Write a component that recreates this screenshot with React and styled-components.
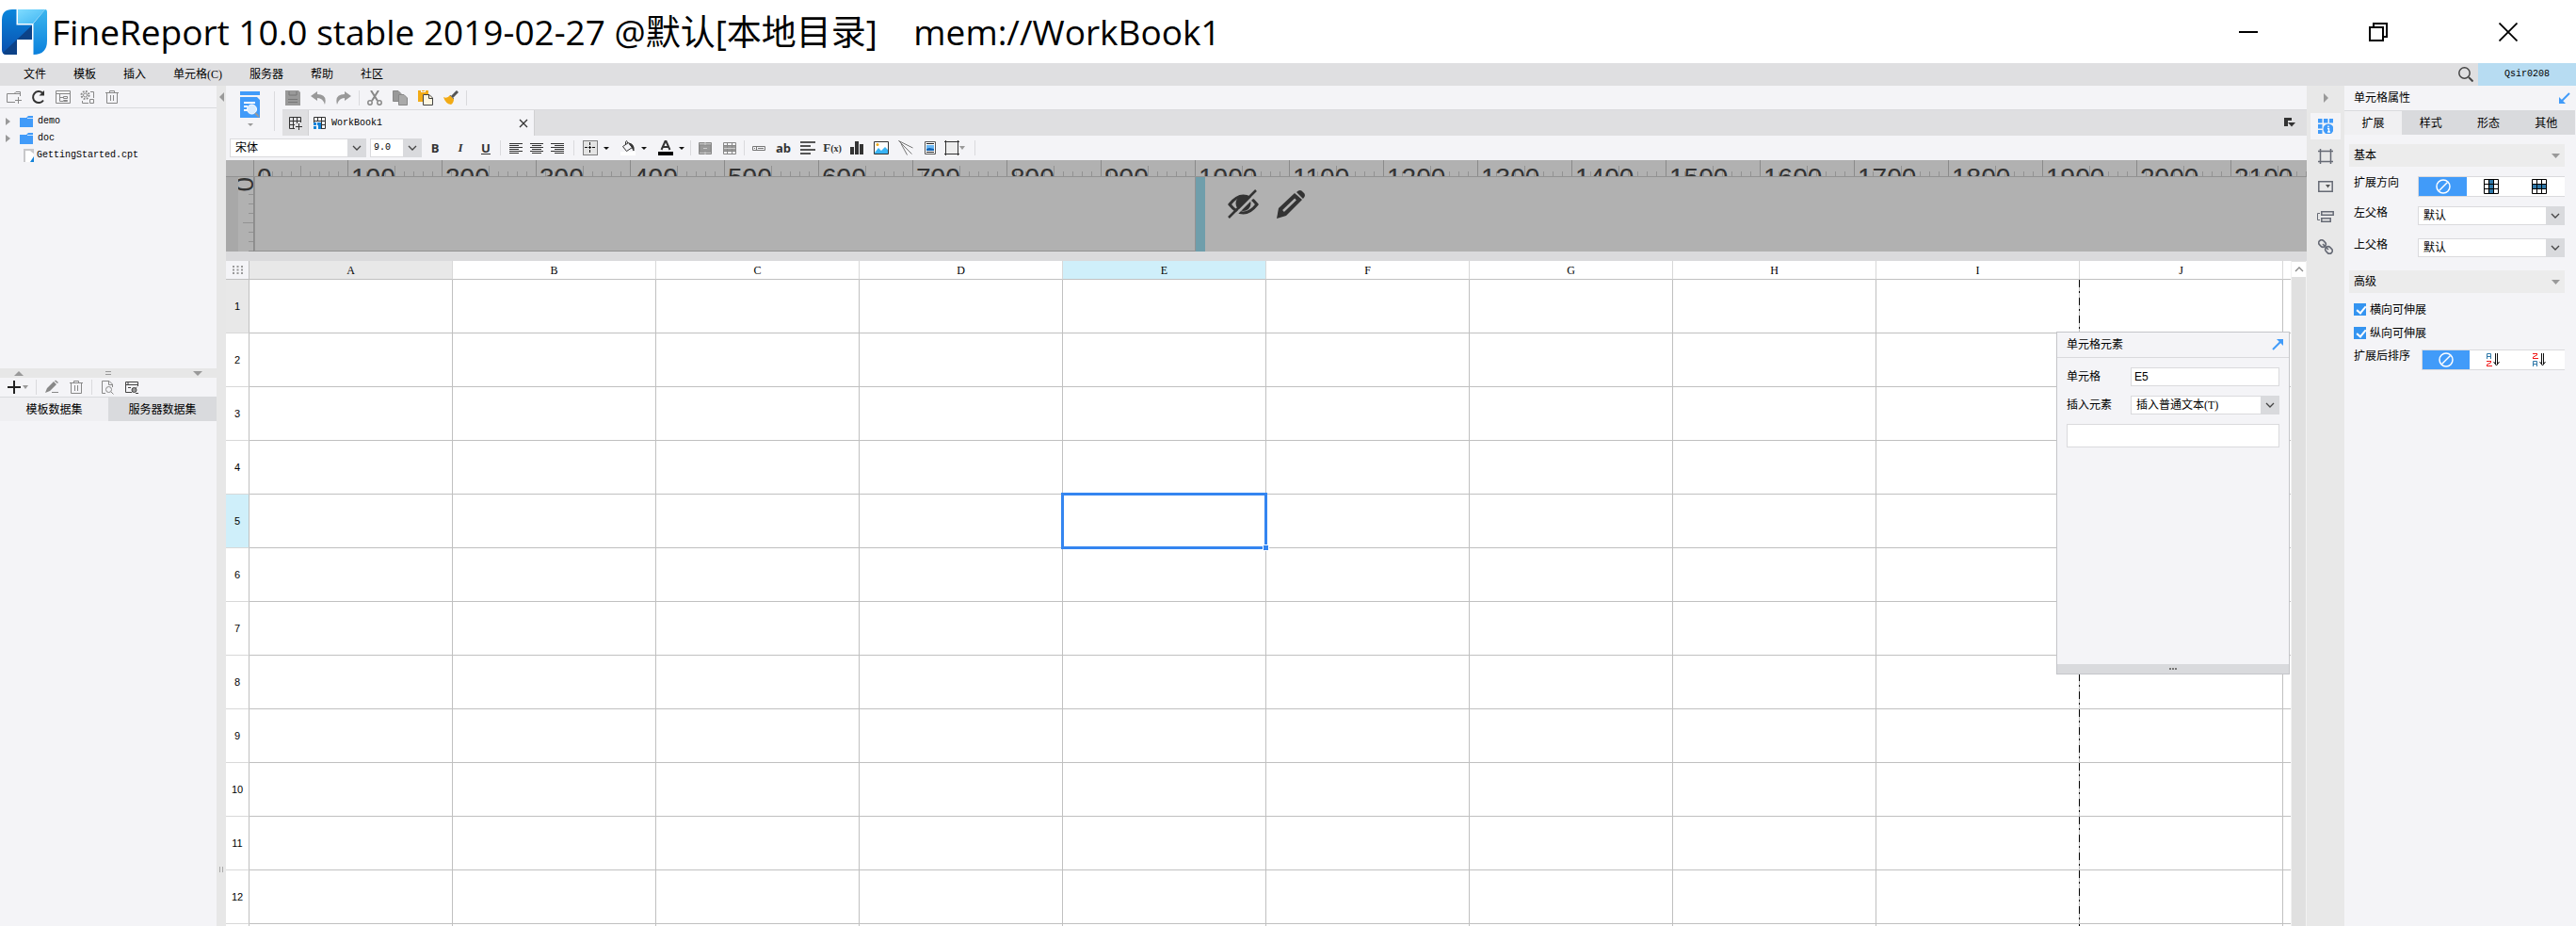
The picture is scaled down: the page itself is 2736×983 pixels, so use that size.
import React from 'react';
import styled, { createGlobalStyle, css } from 'styled-components';

const GlobalStyle = createGlobalStyle`
    * {
        box-sizing: border-box;
    }
    body {
        margin: 0;
        background: #f4f4f7;
        color: #000;
        font: 12px/16px "Liberation Serif", "Noto Sans CJK SC", sans-serif;
    }
    button, select, input {
        font: inherit;
        color: inherit;
        margin: 0;
        padding: 0;
        border: 0;
        border-radius: 0;
        background: none;
    }
    svg {
        display: block;
        flex: none;
    }
`;

const mono = css`
    font-family: "Liberation Mono", "Noto Sans CJK SC", monospace;
    font-size: 10px;
`;

/* window */
const AppStyle = styled.div`
    display: flex;
    flex-direction: column;
    height: 100vh;
    overflow: hidden;
`;
const TitleBarStyle = styled.header`
    display: flex;
    align-items: center;
    flex: none;
    height: 67px;
    padding: 0 3px 0 2px;
    background: #fff;
`;
const TitleStyle = styled.h1`
    flex: 1;
    margin: 0 0 0 5px;
    font: 400 37px/48px "Open Sans", "Noto Sans CJK SC", sans-serif;
    white-space: pre;
`;
const WindowBtnStyle = styled.button`
    display: flex;
    align-items: center;
    justify-content: center;
    width: 138px;
    height: 64px;
`;
const MenuBarStyle = styled.nav`
    display: flex;
    align-items: center;
    flex: none;
    gap: 29px;
    height: 24px;
    padding-left: 25px;
    background: #dfdfe1;
`;
const SearchBtnStyle = styled.button`
    margin-left: auto;
    margin-right: -24px;
`;
const UserStyle = styled.button`
    ${mono}
    width: 104px;
    height: 24px;
    background: #b7dcf2;
`;
const BodyStyle = styled.div`
    display: flex;
    flex: 1;
    min-height: 0;
`;

/* shared parts */
const BtnStyle = styled.button`
    display: flex;
    align-items: center;
    justify-content: center;
    gap: ${({$gap}) => $gap || 0}px;
    flex: none;
    width: ${({$w}) => $w || 26}px;
    height: 20px;
`;
const SepStyle = styled.i`
    flex: none;
    width: 1px;
    height: 16px;
    margin: 0 ${({$m}) => $m || 2}px;
    background: #dadadd;
`;
const SelectWrapStyle = styled.div`
    position: relative;
    flex: ${({$w}) => $w ? `0 0 ${$w}px` : '1'};
    height: 20px;
    select {
        appearance: none;
        width: 100%;
        height: 20px;
        padding: 0 22px 0 ${({$pad}) => $pad || 5}px;
        border: 1px solid #dadadd;
        background: #fff;
        ${({$mono}) => $mono && mono}
    }
`;
const CaretStyle = styled.span`
    position: absolute;
    top: 0;
    right: 0;
    display: flex;
    align-items: center;
    justify-content: center;
    width: 20px;
    height: 20px;
    background: #d9dadd;
    pointer-events: none;
`;

/* left side */
const SideStyle = styled.aside`
    display: flex;
    flex-direction: column;
    flex: none;
    width: 230px;
`;
const SideToolbarStyle = styled.div`
    display: flex;
    align-items: center;
    flex: none;
    height: ${({$h}) => $h}px;
    padding-left: 2px;
    border-bottom: 1px solid #d9dadd;
`;
const TreeStyle = styled.ul`
    ${mono}
    flex: none;
    height: 276px;
    margin: 0;
    padding: 5px 0 0;
    list-style: none;
`;
const NodeStyle = styled.li`
    display: flex;
    align-items: center;
    height: 18px;
    padding-left: ${({$leaf}) => $leaf ? 25 : 6}px;
    gap: ${({$leaf}) => $leaf ? 3 : 5}px;
    svg + svg {
        margin-left: 5px;
    }
`;
const HSplitStyle = styled.div`
    display: flex;
    align-items: center;
    justify-content: space-between;
    flex: none;
    height: 10px;
    padding: 0 15px;
    background: #e7e7e7;
`;
const DataTabStyle = styled.button`
    flex: 1;
    height: 25px;
    background: ${({$active}) => $active ? '#efeff2' : '#d9dadd'};
`;
const TabsStyle = styled.div`
    display: flex;
    flex: none;
`;
const VSplitStyle = styled.div`
    display: flex;
    flex-direction: column;
    align-items: center;
    justify-content: space-between;
    flex: none;
    width: 10px;
    padding: 7px 0 57px;
    background: #e7e7e7;
`;

/* centre */
const MainStyle = styled.main`
    position: relative;
    display: flex;
    flex-direction: column;
    flex: 1;
    min-width: 0;
`;
const TopStyle = styled.div`
    display: flex;
    flex: none;
    height: 53px;
`;
const PreviewBtnStyle = styled.button`
    display: flex;
    flex-direction: column;
    align-items: center;
    gap: 6px;
    width: 52px;
    margin: 6px 0 5px;
    border-right: 1px solid #dadadd;
`;
const TopRightStyle = styled.div`
    flex: 1;
    padding-left: 8px;
`;
const ActionsStyle = styled.div`
    display: flex;
    align-items: center;
    height: 25px;
    gap: 1px;
    margin-left: -2px;
`;
const FileTabsStyle = styled.div`
    display: flex;
    height: 28px;
    padding-right: 12px;
    align-items: center;
    border-top: 1px solid #dadadd;
    background: #dfdfe1;
`;
const FileTabStyle = styled.div`
    display: flex;
    align-items: center;
    width: 241px;
    height: 27px;
    padding: 0 6px 0 5px;
    margin-right: auto;
    border: solid #d0d0d2;
    border-width: 0 1px;
    background: #f4f4f7;
    span {
        ${mono}
        flex: 1;
        padding-left: 5px;
    }
`;
const FormatBarStyle = styled.div`
    display: flex;
    align-items: center;
    flex: none;
    height: 26px;
    padding-left: 4px;
    gap: 4px;
`;
const GroupsStyle = styled.div`
    display: flex;
    margin-left: -3px;
`;
const GroupStyle = styled.div`
    display: flex;
    align-items: center;
    gap: ${({$gap}) => $gap || 0}px;
    height: 16px;
    padding: 0 ${({$pr}) => $pr || 2}px 0 ${({$pl}) => $pl || 0}px;
    border-right: 1px solid #dadadd;
`;
const GlyphStyle = styled.span`
    font-family: ${({$serif}) => $serif ? '"Liberation Serif", serif' : '"Open Sans", sans-serif'};
    font-size: 13px;
    font-weight: 700;
    line-height: 14px;
    color: #333;
    font-style: ${({$italic}) => $italic ? 'italic' : 'normal'};
    ${({$line}) => $line && css`
        line-height: 12px;
        border-bottom: 1px solid #333;
    `}
    small {
        font-size: 10px;
    }
`;

/* parameter pane */
const RulerStyle = styled.div`
    display: flex;
    flex: none;
    height: 18px;
    padding-left: 29px;
    background: #b1b1b1;
    border-bottom: 1px solid #929292;
    overflow: hidden;
`;
const tick = '#929292';
const MarkStyle = styled.span`
    flex: 0 0 100px;
    height: 17px;
    padding: 3px 0 0 3px;
    border-left: 1px solid #8a8a8a;
    background:
        linear-gradient(${tick}, ${tick}) 49px 100% / 1px 11px no-repeat,
        repeating-linear-gradient(90deg, transparent 0 9px, ${tick} 9px 10px) 0 100% / 100% 5px no-repeat;
    font: 28px/32px "Liberation Sans", sans-serif;
    color: #333;
`;
const ParamStyle = styled.div`
    display: flex;
    flex: none;
    height: 79px;
    background: #b1b1b1;
`;
const VRulerStyle = styled.div`
    width: 30px;
    overflow: hidden;
    border-left: 13px solid #a8a8a8;
    border-right: 1px solid #8a8a8a;
    background:
        linear-gradient(${tick}, ${tick}) 100% 48px / 11px 1px no-repeat,
        repeating-linear-gradient(transparent 0 9px, ${tick} 9px 10px) 100% 9px / 5px 100% no-repeat;
    font: 28px/20px "Liberation Sans", sans-serif;
    writing-mode: vertical-rl;
    color: #333;
`;
const CanvasStyle = styled.div`
    width: 1000px;
    border: solid #929292;
    border-width: 0 1px 1px;
`;
const HandleStyle = styled.div`
    width: 10px;
    background: #6f9eab;
`;
const ParamActionsStyle = styled.div`
    display: flex;
    gap: 18px;
    padding: 13px 24px;
    align-items: flex-start;
`;

/* sheet */
const SheetAreaStyle = styled.div`
    display: flex;
    flex: 1;
    min-height: 0;
    border-top: 10px solid #dadadc;
`;
const SheetClipStyle = styled.div`
    flex: 1;
    overflow: hidden;
    background: #fff;
`;
const SheetStyle = styled.table`
    width: 100%;
    table-layout: fixed;
    border-collapse: separate;
    border-spacing: 0;
    th, td {
        padding: 0;
        border: solid #c0c0c0;
        border-width: 0 1px 1px 0;
    }
    th {
        font-weight: 400;
    }
    tr > :last-child {
        border-right: 0;
    }
`;
const headBg = ({$first, $active}) => $active ? '#cfeffa' : $first ? '#e8e8e8' : '#fff';
const ColHeadStyle = styled.th`
    && {
        width: ${({$w}) => $w}px;
        height: 20px;
        border-right-color: #d8d8d8;
        background: ${headBg};
    }
`;
const CornerStyle = styled.th`
    width: 25px;
    background: #f4f4f7;
    svg {
        margin: 0 auto;
    }
`;
const RowHeadStyle = styled.th`
    && {
        height: 57px;
        border-bottom-color: #d8d8d8;
        background: ${headBg};
        font-family: "Liberation Sans", sans-serif;
        font-size: 11px;
    }
`;
const CellStyle = styled.td`
    position: relative;
    ${({$pageEnd}) => $pageEnd && css`
        && {
            border-right-color: transparent;
            background: repeating-linear-gradient(#000 0 8px, #c0c0c0 8px 12px, #000 12px 14px, #c0c0c0 14px 19px)
                right / 1px 100% no-repeat border-box;
        }
    `}
`;
const SelectionStyle = styled.div`
    position: absolute;
    inset: -2px;
    z-index: 1;
    border: 3px solid #3485f0;
    &::after {
        content: "";
        position: absolute;
        right: -4px;
        bottom: -4px;
        width: 5px;
        height: 5px;
        background: #3485f0;
        box-shadow: 0 0 0 1px #fff;
    }
`;
const ScrollStyle = styled.div`
    width: 17px;
    padding-top: 1px;
    border: solid #f2f2f2;
    border-width: 0 1px;
    background: #e0e0e0;
    button {
        display: flex;
        align-items: center;
        justify-content: center;
        width: 15px;
        height: 16px;
        background: #fff;
    }
`;

/* floating cell element window */
const FloatStyle = styled.section`
    position: absolute;
    top: 261px;
    right: 18px;
    z-index: 2;
    display: flex;
    flex-direction: column;
    width: 248px;
    height: 364px;
    border: 1px solid #c4c5c9;
    background: #f4f4f7;
`;
const FloatHeadStyle = styled.div`
    display: flex;
    align-items: center;
    justify-content: space-between;
    height: 27px;
    padding: 0 6px 0 10px;
    border-bottom: 1px solid #d9dadd;
`;
const FloatBodyStyle = styled.div`
    display: flex;
    flex-direction: column;
    flex: 1;
    gap: 10px;
    padding: 10px;
`;
const FieldStyle = styled.div`
    display: flex;
    align-items: center;
    > label {
        flex: 0 0 68px;
    }
`;
const InputStyle = styled.input`
    && {
        flex: 1;
        width: 100%;
        min-width: 0;
        height: ${({$h}) => $h || 20}px;
        padding: 0 3px;
        border: 1px solid #dadadd;
        background: #fff;
        font-family: "Liberation Sans", sans-serif;
    }
`;
const GripStyle = styled.div`
    display: flex;
    align-items: center;
    justify-content: center;
    height: 10px;
    background: #d9dadd;
`;

/* right side */
const RailStyle = styled.div`
    display: flex;
    flex-direction: column;
    align-items: center;
    flex: none;
    gap: 4px;
    width: 40px;
    background: #e8e8e8;
`;
const RailBtnStyle = styled.button`
    display: flex;
    align-items: center;
    justify-content: center;
    width: 32px;
    height: ${({$h}) => $h || 28}px;
    background: ${({$active}) => $active ? '#f4f4f7' : 'none'};
`;
const PropsStyle = styled.aside`
    flex: none;
    width: 246px;
    padding-right: 1px;
`;
const PropsHeadStyle = styled.div`
    display: flex;
    align-items: center;
    justify-content: space-between;
    height: 27px;
    padding: 0 5px 0 10px;
    border-bottom: 1px solid #d9dadd;
`;
const PropTabStyle = styled.button`
    flex: 1;
    height: 25px;
    background: ${({$active}) => $active ? '#f0f0f2' : '#d9dadd'};
`;
const PropsBodyStyle = styled.div`
    padding: 10px 11px 0 5px;
`;
const SectionHeadStyle = styled.div`
    display: flex;
    align-items: center;
    justify-content: space-between;
    height: 24px;
    margin-bottom: 10px;
    padding: 0 5px;
    background: #ececec;
`;
const PropRowStyle = styled.div`
    display: flex;
    padding-left: 5px;
    margin-bottom: ${({$mb}) => $mb}px;
    > span, > label {
        flex: 0 0 ${({$label}) => $label || 68}px;
        line-height: 14px;
    }
`;
const SegStyle = styled.div`
    display: flex;
    flex: 1;
    height: 22px;
    padding-right: 2px;
    border: solid #dadadd;
    border-width: 1px 0 1px 1px;
    background: #fff;
`;
const SegBtnStyle = styled.button`
    display: flex;
    align-items: center;
    justify-content: center;
    flex: 1;
    background: ${({$active}) => $active ? '#419bf9' : '#fff'};
`;
const CheckStyle = styled.label`
    display: flex;
    align-items: center;
    gap: 4px;
    height: 15px;
    margin-bottom: 10px;
    padding-left: 5px;
    input {
        appearance: none;
        display: grid;
        width: 13px;
        height: 13px;
        background: #3494f0;
        &:checked::after {
            content: "";
            width: 4px;
            height: 8px;
            margin: 1px 0 0 5px;
            border: solid #fff;
            border-width: 0 2px 2px 0;
            transform: rotate(40deg);
        }
    }
`;

const Svg = ({w = 16, h = 16, c = '#888', sw = 1, children}) => (
    <svg width={w} height={h} viewBox={`0 0 ${w} ${h}`} fill="none" stroke={c} strokeWidth={sw} aria-hidden="true">
        {children}
    </svg>
);
const Arrow = ({dir = 'down', c = '#999', w = 9, h = 5}) => {
    const d = {
        down: `M0 0H${w}L${w / 2} ${h}Z`,
        up: `M0 ${h}H${w}L${w / 2} 0Z`,
        left: `M${w} 0V${h}L0 ${h / 2}Z`,
        right: `M0 0V${h}L${w} ${h / 2}Z`,
    }[dir];
    return <Svg w={w} h={h} c="none"><path d={d} fill={c}/></Svg>;
};
const Chevron = ({up}) => (
    <Svg w={10} h={6} c={up ? '#888' : '#444'} sw={1.3}><path d={up ? 'M1 5L5 1L9 5' : 'M1 1L5 5L9 1'}/></Svg>
);
const Select = ({id, label, value, ...rest}) => (
    <SelectWrapStyle {...rest}>
        <select id={id} aria-label={label} defaultValue={value}><option>{value}</option></select>
        <CaretStyle><Chevron/></CaretStyle>
    </SelectWrapStyle>
);

const Logo = () => (
    <svg width="48" height="48" viewBox="0 0 48 48" aria-hidden="true">
        <defs>
            <linearGradient id="lgA" x1="0" y1="0" x2="0" y2="1"><stop stopColor="#0a86dc"/><stop offset="1" stopColor="#0a4fae"/></linearGradient>
            <linearGradient id="lgB" x1="0" y1="0" x2="1" y2="1"><stop stopColor="#7fdcff"/><stop offset="1" stopColor="#3fb4f2"/></linearGradient>
            <linearGradient id="lgC" x1="0" y1="0" x2="0" y2="1"><stop stopColor="#3cb6ee"/><stop offset="1" stopColor="#0a80dc"/></linearGradient>
        </defs>
        <path d="M11 0H15.5V16.5H32V32H16V48H5Q0 48 0 43V11Q0 0 11 0Z" fill="url(#lgA)"/>
        <path d="M32 17V32H16V48H5Q2 48 1 46Z" fill="#0d4287"/>
        <path d="M17 0H46L33 15H17Z" fill="url(#lgB)"/>
        <path d="M46 0Q48 0 48 3V33Q48 48 33.5 48V15Z" fill="url(#lgC)"/>
    </svg>
);

const icons = {
    newFolder: <Svg><path d="M9 13.500H.5V4.500H8L10 2.500H14.500V7M8 4.500H14M12.500 8V15M9 11.500H16"/></Svg>,
    refresh: <Svg c="#333" sw={2}><path d="M12 3.500A6 6 0 1 0 13 11.500"/><path d="M14 1V6.500H8.500Z" fill="#333" stroke="none"/></Svg>,
    panel: <Svg><path d="M.5 1.500H15.500V14.500H.5ZM.5 4.500H15.500M4.500 5V12.500H8M4.500 8.500H8M8.500 7.500H12.500V9.500H8.500ZM8.500 11.500H12.500V12.500H8.500Z"/></Svg>,
    gear: <Svg><circle cx="5.500" cy="6" r="2"/><circle cx="5.500" cy="6" r="4" strokeDasharray="1.700 1.440" strokeWidth="2"/><path d="M11 2.500H14.500V9M2.500 12V14.500H9M10.500 10.500H14.500V14.500H10.500Z"/></Svg>,
    trash: <Svg><path d="M1 3.500H15M5.500 3V1.500H10.500V3M2.500 4V14.500H13.500V4M6.500 6V12M9.500 6V12"/></Svg>,
    folder: <Svg w={14} h={12} c="none"><path d="M0 2H7L9 0H14V12H0Z" fill="#419bf9"/><path d="M8 2.500H14" stroke="#cfe6ff"/></Svg>,
    cpt: <Svg w={11} h={14} c="none"><path d="M0 0H11V5L6 2H2V14H0Z" fill="#c8c8ca"/><path d="M2 2H7L11 6V14H2Z" fill="#fff"/><path d="M7 14L11 8V14Z" fill="#1282d8"/></Svg>,
    plus: <Svg w={14} h={14} c="#222" sw={2}><path d="M7 0V14M0 7H14"/></Svg>,
    edit: <Svg c="none"><path d="M1 14L3 9L10 2L13 5L6 12ZM11 1.500L12 .5L15 3L14 4Z" fill="#888"/><path d="M8 13.500H15" stroke="#888"/></Svg>,
    docSearch: <Svg><path d="M6 14.500H2.500V1.500H10L13.500 5V8M9.500 1.500V5.500H13"/><circle cx="9.500" cy="10.500" r="3"/><path d="M12 13L14.500 15.500"/></Svg>,
    winLink: <Svg c="#444"><path d="M7 13.500H1.500V2.500H14.500V7M1.500 5.500H14.500M4 8.500H7M3 4H5"/><path d="M7 14L13.500 8"/><circle cx="10.500" cy="11" r="2.500" fill="#999"/><path d="M12 14.500H15"/></Svg>,
    preview: (
        <Svg w={21} h={28} c="none">
            <path d="M0 0H21V4H0ZM0 6H18L21 9V28H0Z" fill="#419bf9"/>
            <path d="M4 12H16M4 16H8M4 20H8" stroke="#fff" strokeWidth="2"/>
            <circle cx="12.500" cy="19" r="5" fill="#d8ecff" stroke="#fff"/><path d="M16 23L20 27" stroke="#999" strokeWidth="2"/>
        </Svg>
    ),
    save: <Svg c="none"><path d="M0 0H14L16 2V16H0Z" fill="#999"/><path d="M4 1V5H12V1M3 9.500H13M3 12.500H13" stroke="#777"/></Svg>,
    undo: <Svg c="none"><path d="M7 1L0 6L7 11V8Q13 8 15 15Q18 4 7 4Z" fill="#999"/></Svg>,
    redo: <Svg c="none"><path d="M9 1L16 6L9 11V8Q3 8 1 15Q-2 4 9 4Z" fill="#999"/></Svg>,
    cut: <Svg c="#888" sw={2}><path d="M4 0L11 11M12 0L5 11"/><circle cx="3" cy="13" r="2.200" strokeWidth="1.500"/><circle cx="13" cy="13" r="2.200" strokeWidth="1.500"/></Svg>,
    copy: <Svg c="#888"><path d="M.5 .5H6L9 3.500V11.500H.5Z" fill="#999"/><path d="M6.500 4.500H12L15.500 8V15.500H6.500Z" fill="#aaa"/></Svg>,
    paste: <Svg c="none"><path d="M0 0H3V2H8V0H11V4H5V12H0ZM4 0H7V1H4Z" fill="#f2ab16"/><path d="M5.500 4.500H12L15.500 8V15.500H5.500Z" fill="#fff6e0" stroke="#444"/><path d="M11.500 5V8.500H15" stroke="#444"/></Svg>,
    brush: <Svg c="none"><path d="M15 1L9 7" stroke="#555" strokeWidth="3"/><path d="M0 7Q4 9 7 5L11 9Q11 13 8 15Q2 14 0 7Z" fill="#f2ab16"/><path d="M7 5L11 9" stroke="#777"/></Svg>,
    newSheet: <Svg w={14} h={14} c="#333"><path d="M6 12.500H.5V.5H12.500V6M.5 4.500H12.500M.5 8.500H6M4.500 1V12M8.500 1V7M10.500 7V14M7 10.500H14"/></Svg>,
    sheet: <Svg w={14} h={14} c="#333"><path d="M.5 6V.5H12.500V12.500H9M.5 4.500H12.500M4.500 1V5M8.500 1V13M8 8.500H12"/><path d="M0 6H3V9H0ZM0 10H3V13H0ZM4 6H8V13H5V9H4Z" fill="#1282d8" stroke="none"/></Svg>,
    close: <Svg w={10} h={10} c="#333" sw={1.3}><path d="M1 1L9 9M9 1L1 9"/></Svg>,
    tabList: <Svg w={12} h={11} c="none"><path d="M0 0H8V3H4V9H0Z" fill="#333"/><path d="M4 5H12L8 9.500Z" fill="#333"/></Svg>,
    left: <Svg w={14} h={11} c="#333"><path d="M0 .5H14M0 2.500H10M0 4.500H14M0 6.500H10M0 8.500H14M0 10.500H10"/></Svg>,
    center: <Svg w={14} h={11} c="#333"><path d="M0 .5H14M2 2.500H12M0 4.500H14M2 6.500H12M0 8.500H14M2 10.500H12"/></Svg>,
    right: <Svg w={14} h={11} c="#333"><path d="M0 .5H14M4 2.500H14M0 4.500H14M4 6.500H14M0 8.500H14M4 10.500H14"/></Svg>,
    border: <Svg c="#111"><path d="M.5 .5H15.500V15.500H.5Z" fill="#e4e4e4" strokeDasharray="1 1"/><path d="M7.500 2V14M2 7.500H14" strokeDasharray="3 1"/></Svg>,
    fill: <Svg c="#333"><path d="M2.500 6.500L8.500 2.500L12.500 7.500L6.500 11.500ZM5.500 5V1.500Q7 -1 7.500 3"/><path d="M9 3Q15 4 14 11L12 7Z" fill="#333"/><path d="M0 14H16" stroke="#fff" strokeWidth="4"/></Svg>,
    font: <Svg c="#333" sw={2}><path d="M3.500 10L7.500 1H8.500L12.500 10M5 7H11"/><path d="M0 14H16" stroke="#000" strokeWidth="4"/></Svg>,
    merge: <Svg w={14} h={13}><path d="M.5 .5H13.500V12.500H.5Z" fill="#bbb"/><path d="M1 3H13V10H1Z" fill="#999"/><path d="M7 0V3M7 10V13M5 6.500H9" stroke="#ccc"/></Svg>,
    unmerge: <Svg w={14} h={13}><path d="M0 3H14V10H0Z" fill="#999" stroke="none"/><path d="M.5 .5H13.500V12.500H.5ZM0 3.500H14M0 9.500H14M4.500 0V13M9.500 0V13"/><path d="M1 6.500H13" stroke="#ccc"/></Svg>,
    textBox: <Svg w={14} h={5} c="#777"><path d="M.5 .5H13.500V4.500H.5ZM4.500 0V5M2 2.500H3M6 2.500H12"/></Svg>,
    lines: <Svg w={16} h={14} c="#555" sw={2}><path d="M0 1H16M0 5H11M0 9H16M0 13H11"/></Svg>,
    chart: <Svg w={14} h={14} c="none"><path d="M0 6H4V14H0ZM5 0H9V14H5ZM10 3H14V14H10Z" fill="#333"/></Svg>,
    image: <Svg w={16} h={14} c="#333"><path d="M.5 .5H15.500V13.500H.5Z" fill="#fff"/><path d="M1 12L5 7L8 10L12 6L15 9V13H1Z" fill="#39b4f5" stroke="none"/><circle cx="4" cy="3.500" r="1.500" fill="#f2ab16" stroke="none"/></Svg>,
    slope: <Svg c="#777"><path d="M.5 .5L15.500 8M.5 .5L14.500 14.500M3 3.500L9.500 15.500"/></Svg>,
    report: <Svg w={12} h={14} c="#555"><path d="M.5 .5H11.500V13.500H.5Z" fill="#fff"/><path d="M2 2.500H10M2 11.500H10" stroke="#222"/><path d="M2 4H10V10H2Z" fill="#6bb8f5" stroke="none"/><path d="M2 10V8L5 7L10 8V10Z" fill="#1464b4" stroke="none"/></Svg>,
    shape: <Svg c="#333"><path d="M1.500 0V16M14.500 0V16M0 1.500H16M0 14.500H16"/><path d="M2 2H14V14H2Z" fill="#eee" stroke="none"/></Svg>,
};

const columns = ['A', 'B', 'C', 'D', 'E', 'F', 'G', 'H', 'I', 'J'];
const rows = Array.from({length: 13}, (_, i) => i + 1);
const marks = Array.from({length: 22}, (_, i) => i * 100);
const selected = {col: 'E', row: 5};

const SidePanel = () => (
    <SideStyle>
        <SideToolbarStyle $h={24}>
            {['newFolder', 'refresh', 'panel', 'gear', 'trash'].map(n => (
                <BtnStyle key={n} aria-label={n}>{icons[n]}</BtnStyle>
            ))}
        </SideToolbarStyle>
        <TreeStyle>
            <NodeStyle><Arrow dir="right" w={5} h={8}/>{icons.folder}demo</NodeStyle>
            <NodeStyle><Arrow dir="right" w={5} h={8}/>{icons.folder}doc</NodeStyle>
            <NodeStyle $leaf>{icons.cpt}GettingStarted.cpt</NodeStyle>
        </TreeStyle>
        <HSplitStyle>
            <Arrow dir="up" w={10}/>
            <Svg w={6} h={4} c="#999"><path d="M0 .5H6M0 3.500H6"/></Svg>
            <Arrow w={10}/>
        </HSplitStyle>
        <SideToolbarStyle $h={21}>
            <BtnStyle aria-label="add" $gap={2} $w={33}>{icons.plus}<Arrow w={6} h={4}/></BtnStyle>
            <SepStyle $m={3}/>
            <BtnStyle aria-label="edit">{icons.edit}</BtnStyle>
            <BtnStyle aria-label="delete">{icons.trash}</BtnStyle>
            <SepStyle $m={3}/>
            <BtnStyle aria-label="preview data">{icons.docSearch}</BtnStyle>
            <BtnStyle aria-label="connection">{icons.winLink}</BtnStyle>
        </SideToolbarStyle>
        <TabsStyle>
            <DataTabStyle $active>模板数据集</DataTabStyle>
            <DataTabStyle>服务器数据集</DataTabStyle>
        </TabsStyle>
    </SideStyle>
);

const FormatBar = () => (
    <FormatBarStyle>
        <Select label="font" value="宋体" $w={145}/>
        <Select label="size" value="9.0" $w={55} $pad={3} $mono/>
        <GroupsStyle>
            <GroupStyle $gap={1}>
                <BtnStyle><GlyphStyle>B</GlyphStyle></BtnStyle>
                <BtnStyle><GlyphStyle $serif $italic>I</GlyphStyle></BtnStyle>
                <BtnStyle><GlyphStyle $line>U</GlyphStyle></BtnStyle>
            </GroupStyle>
            <GroupStyle $pl={5} $pr={6}>
                {['left', 'center', 'right'].map(n => <BtnStyle key={n} $w={22} aria-label={n}>{icons[n]}</BtnStyle>)}
            </GroupStyle>
            <GroupStyle $pl={5} $gap={4}>
                {['border', 'fill', 'font'].map(n => (
                    <BtnStyle key={n} $w={36} $gap={6} aria-label={n}>{icons[n]}<Arrow c="#111" w={6} h={3}/></BtnStyle>
                ))}
            </GroupStyle>
            <GroupStyle $pl={2}>
                {['merge', 'unmerge'].map(n => <BtnStyle key={n} aria-label={n}>{icons[n]}</BtnStyle>)}
            </GroupStyle>
            <GroupStyle $pl={2} $pr={8}>
                <BtnStyle aria-label="text box">{icons.textBox}</BtnStyle>
                <BtnStyle><GlyphStyle>ab</GlyphStyle></BtnStyle>
                <BtnStyle aria-label="rich text">{icons.lines}</BtnStyle>
                <BtnStyle><GlyphStyle $serif>F<small>(x)</small></GlyphStyle></BtnStyle>
                {['chart', 'image', 'slope', 'report'].map(n => <BtnStyle key={n} aria-label={n}>{icons[n]}</BtnStyle>)}
                <BtnStyle aria-label="shape">{icons.shape}<Arrow w={6} h={4}/></BtnStyle>
            </GroupStyle>
        </GroupsStyle>
    </FormatBarStyle>
);

const Sheet = () => (
    <SheetStyle>
        <thead>
            <tr>
                <CornerStyle>
                    <Svg w={11} h={9} c="#999" sw={2}>
                        <path d="M1 0V9M5.500 0V9M10 0V9" strokeDasharray="2 1.500"/>
                    </Svg>
                </CornerStyle>
                {columns.map(c => <ColHeadStyle key={c} $w={216} $first={c === 'A'} $active={c === selected.col}>{c}</ColHeadStyle>)}
                <ColHeadStyle/>
            </tr>
        </thead>
        <tbody>
            {rows.map(r => (
                <tr key={r}>
                    <RowHeadStyle $first={r === 1} $active={r === selected.row}>{r}</RowHeadStyle>
                    {columns.map(c => (
                        <CellStyle key={c} $pageEnd={c === 'I'}>
                            {c === selected.col && r === selected.row && <SelectionStyle/>}
                        </CellStyle>
                    ))}
                    <CellStyle/>
                </tr>
            ))}
        </tbody>
    </SheetStyle>
);

const CellElement = () => (
    <FloatStyle>
        <FloatHeadStyle>
            单元格元素
            <Svg w={12} h={12} c="#419bf9" sw={2}><path d="M1 11L9 3"/><path d="M5 0H12V7L9 4Z" fill="#419bf9" stroke="none"/></Svg>
        </FloatHeadStyle>
        <FloatBodyStyle>
            <FieldStyle>
                <label htmlFor="cell">单元格</label>
                <InputStyle id="cell" defaultValue="E5"/>
            </FieldStyle>
            <FieldStyle>
                <label htmlFor="insert">插入元素</label>
                <Select id="insert" value="插入普通文本(T)"/>
            </FieldStyle>
            <FieldStyle><InputStyle $h={25} aria-label="content"/></FieldStyle>
        </FloatBodyStyle>
        <GripStyle><Svg w={8} h={2} c="#777" sw={2}><path d="M0 1H8" strokeDasharray="2 1"/></Svg></GripStyle>
    </FloatStyle>
);

const Main = () => (
    <MainStyle>
        <TopStyle>
            <PreviewBtnStyle aria-label="preview">{icons.preview}<Arrow w={6} h={3}/></PreviewBtnStyle>
            <TopRightStyle>
                <ActionsStyle>
                    {['save', 'undo', 'redo'].map(n => <BtnStyle key={n} aria-label={n}>{icons[n]}</BtnStyle>)}
                    <SepStyle/>
                    {['cut', 'copy', 'paste', 'brush'].map(n => <BtnStyle key={n} aria-label={n}>{icons[n]}</BtnStyle>)}
                    <SepStyle/>
                </ActionsStyle>
                <FileTabsStyle>
                    <BtnStyle aria-label="new sheet" $w={27}>{icons.newSheet}</BtnStyle>
                    <FileTabStyle>
                        {icons.sheet}
                        <span>WorkBook1</span>
                        <button aria-label="close tab">{icons.close}</button>
                    </FileTabStyle>
                    <button aria-label="tab list">{icons.tabList}</button>
                </FileTabsStyle>
            </TopRightStyle>
        </TopStyle>
        <FormatBar/>
        <RulerStyle>
            {marks.map(m => <MarkStyle key={m}>{m}</MarkStyle>)}
        </RulerStyle>
        <ParamStyle>
            <VRulerStyle>0</VRulerStyle>
            <CanvasStyle/>
            <HandleStyle/>
            <ParamActionsStyle>
                <button aria-label="hide">
                    <Svg w={33} h={32} c="#333" sw={3}>
                        <path d="M2 16Q9 7 16.500 7Q24 7 31 16Q24 25 16.500 25Q9 25 2 16Z"/>
                        <circle cx="16.500" cy="15" r="8" fill="#333" stroke="none"/>
                        <path d="M3 32L32 3" stroke="#b1b1b1"/>
                        <path d="M1 30L30 1" strokeWidth="2.500"/>
                    </Svg>
                </button>
                <button aria-label="edit parameters">
                    <Svg w={32} h={32} c="none">
                        <path d="M1 31L3 20L20 4L28 11L11 28Z" fill="#333"/>
                        <path d="M8 23L21 10.500" stroke="#b1b1b1" strokeWidth="2.500"/>
                        <path d="M22 3Q26 -1 29 3Q33 6 29 10Z" fill="#333"/>
                    </Svg>
                </button>
            </ParamActionsStyle>
        </ParamStyle>
        <SheetAreaStyle>
            <SheetClipStyle><Sheet/></SheetClipStyle>
            <ScrollStyle><button aria-label="scroll up"><Chevron up/></button></ScrollStyle>
        </SheetAreaStyle>
        <CellElement/>
    </MainStyle>
);

const Rail = () => (
    <RailStyle>
        <RailBtnStyle $h={25} aria-label="collapse"><Arrow dir="right" w={5} h={10}/></RailBtnStyle>
        <RailBtnStyle $active aria-label="cell attributes">
            <Svg c="none">
                <path d="M0 0H4.500V4.500H0ZM6 0H10.500V4.500H6ZM12 0H16V4.500H12ZM0 6H4.500V10.500H0ZM0 12H4.500V16H0Z" fill="#419bf9"/>
                <circle cx="11" cy="11" r="5.500" fill="#419bf9"/>
                <path d="M11 7.500V9M10 10.500H11.500V14M10 14H13" stroke="#fff" strokeWidth="1.400"/>
            </Svg>
        </RailBtnStyle>
        <RailBtnStyle aria-label="floating element">
            <Svg c="#666a75" sw={1.5}><path d="M2.500 0V16M13.500 0V16M0 2.500H16M0 13.500H16"/></Svg>
        </RailBtnStyle>
        <RailBtnStyle aria-label="widget">
            <Svg h={12} c="#666a75" sw={1.5}><path d="M.8 .8H15.200V11.200H.8Z"/><path d="M8 4H13L10.500 7.500Z" fill="#555" stroke="none"/></Svg>
        </RailBtnStyle>
        <RailBtnStyle aria-label="condition">
            <Svg w={18} h={12} c="#666a75" sw={1.5}><path d="M4.800 .8H17.200V4.200H4.800ZM4.800 7.800H14.200V11.200H4.800Z"/><path d="M3 2.500H.5V9.500H3" strokeWidth="1"/></Svg>
        </RailBtnStyle>
        <RailBtnStyle aria-label="hyperlink">
            <Svg c="#666a75" sw={1.6}>
                <rect x="-4" y="-3" width="8" height="6" rx="3" transform="translate(4.500 4.500) rotate(45)"/>
                <rect x="-4" y="-3" width="8" height="6" rx="3" transform="translate(11.500 11.500) rotate(45)"/>
                <path d="M5 5L11 11"/>
            </Svg>
        </RailBtnStyle>
    </RailStyle>
);

const None = () => (
    <Svg w={16} h={16} c="#fff" sw={1.5}><circle cx="8" cy="8" r="7"/><path d="M3.500 12.500L12.500 3.500"/></Svg>
);
const GridIcon = ({d}) => (
    <Svg c="#000"><path d={d} fill="#2f78a8" stroke="none"/><path d="M.5 .5H15.500V15.500H.5ZM5.500 0V16M10.500 0V16M0 5.500H16M0 10.500H16"/></Svg>
);
const SortIcon = ({flip}) => {
    const a = 'M.5 6V.5H4.500V6M.5 3.500H4.500';
    const z = 'M0 .5H5M4.500 .5V2L.5 4V5.500M0 5.500H6';
    return (
        <Svg w={14} h={14} c="#2f78a8">
            <path d={a} transform={flip ? 'translate(0 8)' : undefined}/>
            <path d={z} stroke="#f01818" transform={flip ? undefined : 'translate(0 8)'}/>
            <path d="M9.500 0V12M11.500 0V12M7.500 9L10.500 13L13.500 9" stroke="#111"/>
        </Svg>
    );
};

const Properties = () => (
    <PropsStyle>
        <PropsHeadStyle>
            单元格属性
            <Svg w={12} h={12} c="#419bf9" sw={2}><path d="M11 1L3 9"/><path d="M0 5V12H7L4 9Z" fill="#419bf9" stroke="none"/></Svg>
        </PropsHeadStyle>
        <TabsStyle>
            {['扩展', '样式', '形态', '其他'].map((t, i) => <PropTabStyle key={t} $active={i === 0}>{t}</PropTabStyle>)}
        </TabsStyle>
        <PropsBodyStyle>
            <SectionHeadStyle>基本<Arrow w={9} h={5}/></SectionHeadStyle>
            <PropRowStyle $mb={10}>
                <span>扩展方向</span>
                <SegStyle>
                    <SegBtnStyle $active aria-label="none"><None/></SegBtnStyle>
                    <SegBtnStyle aria-label="vertical"><GridIcon d="M5 0H11V16H5Z"/></SegBtnStyle>
                    <SegBtnStyle aria-label="horizontal"><GridIcon d="M0 5H16V11H0Z"/></SegBtnStyle>
                </SegStyle>
            </PropRowStyle>
            <PropRowStyle $mb={14}>
                <label htmlFor="leftParent">左父格</label>
                <Select id="leftParent" value="默认"/>
            </PropRowStyle>
            <PropRowStyle $mb={14}>
                <label htmlFor="upParent">上父格</label>
                <Select id="upParent" value="默认"/>
            </PropRowStyle>
            <SectionHeadStyle>高级<Arrow w={9} h={5}/></SectionHeadStyle>
            <CheckStyle><input type="checkbox" defaultChecked/>横向可伸展</CheckStyle>
            <CheckStyle><input type="checkbox" defaultChecked/>纵向可伸展</CheckStyle>
            <PropRowStyle $label={72}>
                <span>扩展后排序</span>
                <SegStyle>
                    <SegBtnStyle $active aria-label="no sort"><None/></SegBtnStyle>
                    <SegBtnStyle aria-label="ascending"><SortIcon/></SegBtnStyle>
                    <SegBtnStyle aria-label="descending"><SortIcon flip/></SegBtnStyle>
                </SegStyle>
            </PropRowStyle>
        </PropsBodyStyle>
    </PropsStyle>
);

const App = () => {
    return (
        <AppStyle>
            <GlobalStyle/>
            <TitleBarStyle>
                <Logo/>
                <TitleStyle>{'FineReport 10.0 stable 2019-02-27 @默认[本地目录]    mem://WorkBook1'}</TitleStyle>
                <WindowBtnStyle aria-label="minimize"><Svg w={20} h={20} c="#000" sw={2}><path d="M0 10H20"/></Svg></WindowBtnStyle>
                <WindowBtnStyle aria-label="restore"><Svg w={20} h={20} c="#000" sw={2}><path d="M1 5H15V19H1ZM5 5V1H19V15H15"/></Svg></WindowBtnStyle>
                <WindowBtnStyle aria-label="close"><Svg w={20} h={20} c="#000" sw={1.8}><path d="M.5 .5L19.500 19.500M19.500 .5L.5 19.500"/></Svg></WindowBtnStyle>
            </TitleBarStyle>
            <MenuBarStyle>
                {['文件', '模板', '插入', '单元格(C)', '服务器', '帮助', '社区'].map(m => <button key={m}>{m}</button>)}
                <SearchBtnStyle aria-label="search">
                    <Svg c="#444" sw={1.5}><circle cx="6.500" cy="6.500" r="5.700"/><path d="M11 11L15.500 15.500" strokeWidth="2"/></Svg>
                </SearchBtnStyle>
                <UserStyle>Qsir0208</UserStyle>
            </MenuBarStyle>
            <BodyStyle>
                <SidePanel/>
                <VSplitStyle>
                    <Arrow dir="left" w={5} h={10}/>
                    <Svg w={4} h={6} c="#aaa"><path d="M.5 0V6M3.500 0V6"/></Svg>
                </VSplitStyle>
                <Main/>
                <Rail/>
                <Properties/>
            </BodyStyle>
        </AppStyle>
    );
};

export default App;
